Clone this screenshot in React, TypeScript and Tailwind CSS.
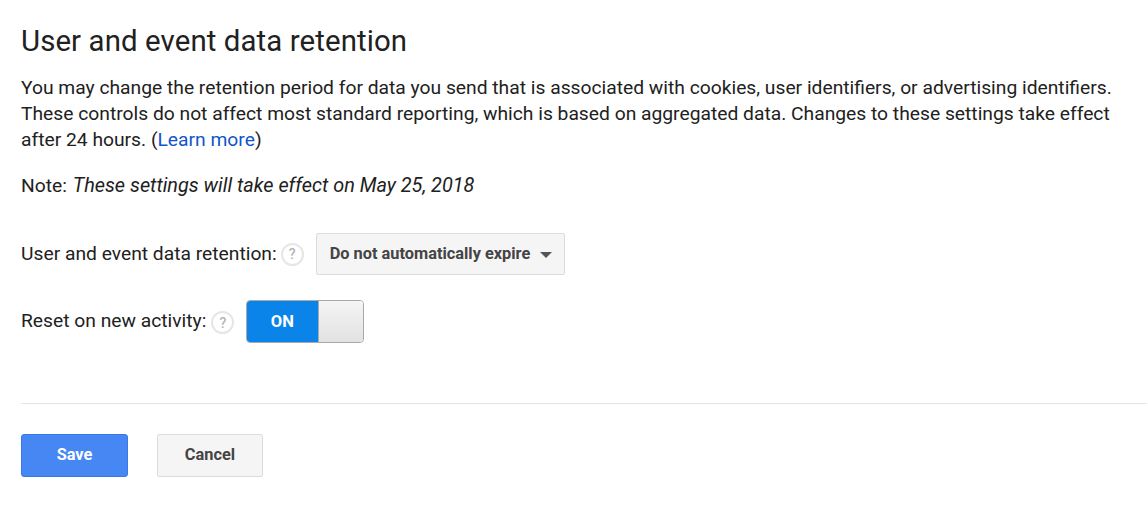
function Help() {
  return (
    <span className="inline-flex h-[23px] w-[23px] shrink-0 items-center justify-center rounded-full border-2 border-[#e6e6e6] bg-white text-[14px] font-medium leading-none text-[#b4b4b4]">
      ?
    </span>
  );
}

export default function App() {
  return (
    <div className="h-[514px] w-[1147px] overflow-hidden bg-white pl-[21px] font-['Roboto',sans-serif] text-[#212121]">
      <h1 className="pt-[22px] text-[29.4px] font-normal leading-[38px] tracking-[0.1px]">User and event data retention</h1>
      <p className="mt-[15px] text-[19.25px] leading-[26px]">
        You may change the retention period for data you send that is associated with cookies, user identifiers, or advertising identifiers.
        <br />
        These controls do not affect most standard reporting, which is based on aggregated data. Changes to these settings take effect
        <br />
        after 24 hours. (<span className="text-[#1155cc]">Learn more</span>)
      </p>
      <p className="mt-[20px] text-[19.25px] leading-[26px]">
        Note: <em className="ml-px text-[19.85px]">These settings will take effect on May 25, 2018</em>
      </p>
      <div className="mt-[34px] flex h-[42px] items-center">
        <span className="text-[19.25px]">User and event data retention:</span>
        <span className="ml-[4px]"><Help /></span>
        <div className="ml-[12px] flex h-[42px] w-[249px] items-center rounded-[2px] border border-[#dcdcdc] bg-[#f5f5f5] pl-[13px] text-[#444444]">
          <span className="mt-px text-[16.35px] font-bold">Do not automatically expire</span>
          <span className="ml-[10px] mt-[2px] h-0 w-0 border-x-[6px] border-t-[6px] border-x-transparent border-t-[#555555]" />
        </div>
      </div>
      <div className="mt-[25px] flex h-[43px] items-center">
        <span className="text-[19.25px]">Reset on new activity:</span>
        <span className="ml-[5px] mt-[2px]"><Help /></span>
        <div className="ml-[12px] flex h-[43px] w-[118px] overflow-hidden rounded-[4px] border border-[#a9a9a9]">
          <div className="-my-px -ml-px flex w-[72px] items-center justify-center bg-[#0a84e8] pt-px text-[16.5px] font-bold text-white">ON</div>
          <div className="flex-1 border-l border-[#a9a9a9] bg-gradient-to-b from-[#f5f5f5] to-[#e2e2e2]" />
        </div>
      </div>
      <div className="mt-[60px] h-px bg-[#e2e2e2]" />
      <div className="mt-[30px] flex gap-[29px]">
        <button className="h-[43px] w-[107px] rounded-[3px] border border-[#3b78e7] bg-[#4687f4] text-[16.35px] font-bold text-white">Save</button>
        <button className="h-[43px] w-[106px] rounded-[2px] border border-[#dcdcdc] bg-[#f5f5f5] text-[16.35px] font-bold text-[#444444]">Cancel</button>
      </div>
    </div>
  );
}
